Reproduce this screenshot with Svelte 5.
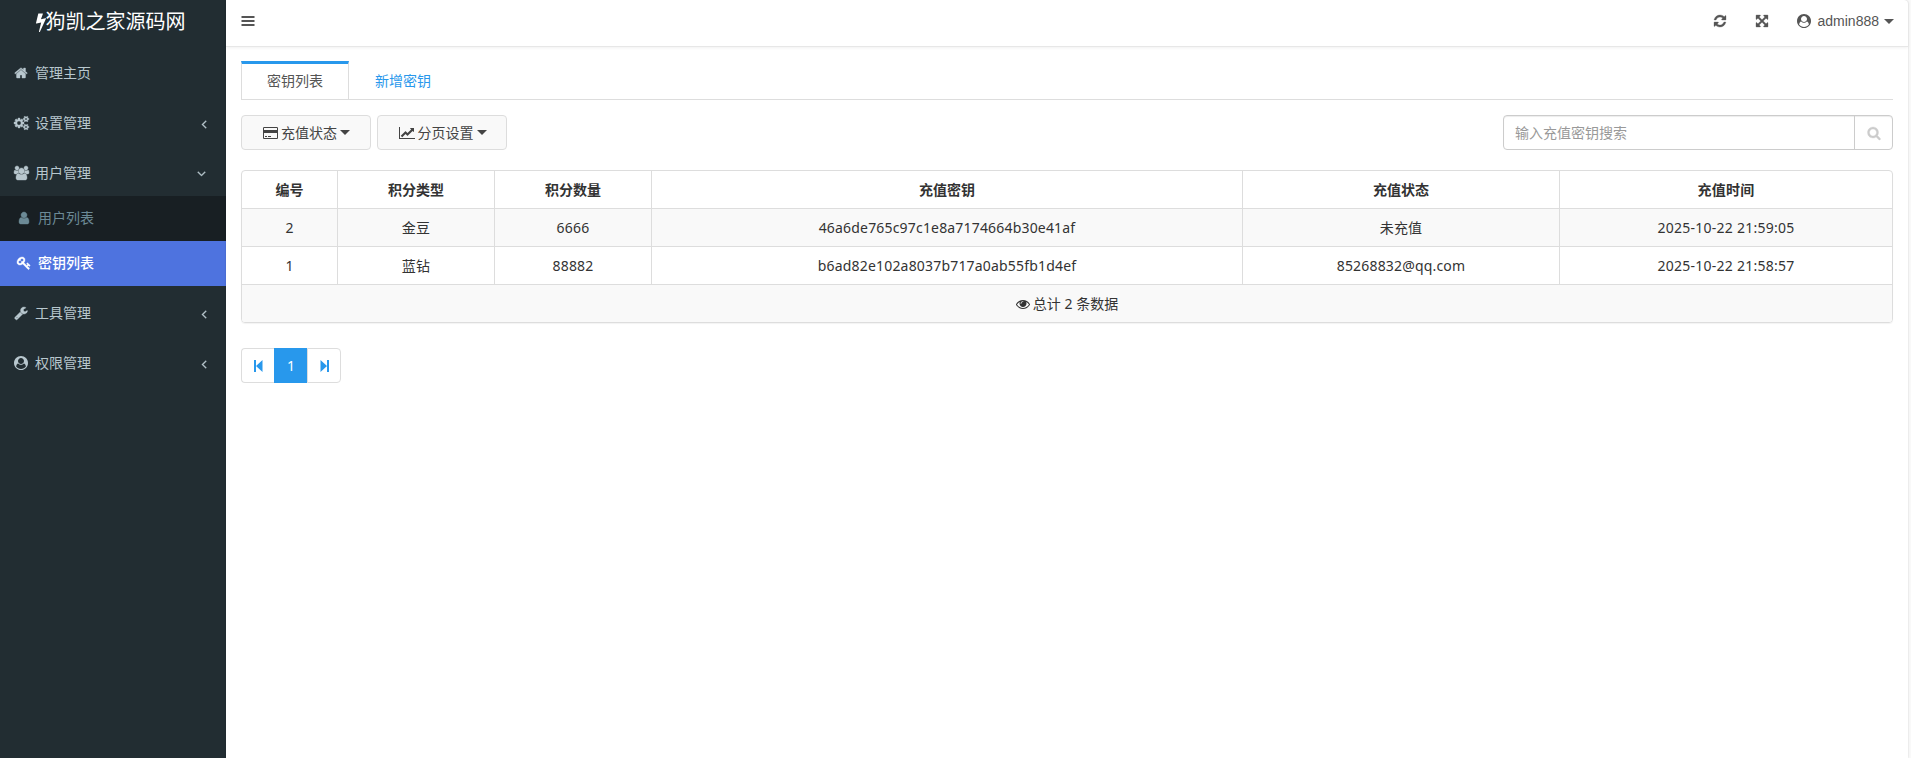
<script>
  const icons = {
    bolt: [1792, 'M1333 566q18 20 7 44l-540 1157q-13 25-42 25-4 0-14-2-17-5-25.5-19t-4.5-30l197-808-406 101q-4 1-12 1-18 0-31-11-18-15-13-39l201-825q4-14 16-23t28-9h328q19 0 32 12.5t13 29.5q0 8-5 18l-171 463 396-98q8-2 12-2 19 0 34 15z'],
    home: [1792, 'M1472 992v480q0 26-19 45t-45 19h-384v-384h-256v384h-384q-26 0-45-19t-19-45v-480q0-1 .5-3t.5-3l575-474 575 474q1 2 1 6zm223-69l-62 74q-8 9-21 11h-3q-13 0-21-7l-692-577-692 577q-12 8-24 7-13-2-21-11l-62-74q-8-10-7-23.5t11-21.5l719-599q32-26 76-26t76 26l244 204v-195q0-14 9-23t23-9h192q14 0 23 9t9 23v408l219 182q10 8 11 21.5t-7 23.5z'],
    cogs: [1920, 'M896 896q0-106-75-181t-181-75-181 75-75 181 75 181 181 75 181-75 75-181zm768 512q0-52-38-90t-90-38-90 38-38 90q0 53 37.5 90.5t90.5 37.5 90.5-37.5 37.5-90.5zm0-1024q0-52-38-90t-90-38-90 38-38 90q0 53 37.5 90.5t90.5 37.5 90.5-37.5 37.5-90.5zm-384 421v185q0 10-7 19.5t-16 10.5l-155 24q-11 35-32 76 34 48 90 115 7 11 7 20 0 12-7 19-23 30-82.5 89.5t-78.5 59.5q-11 0-21-7l-115-90q-37 19-77 31-11 108-23 155-7 24-30 24h-186q-11 0-20-7.5t-10-17.5l-23-153q-34-10-75-31l-118 89q-7 7-20 7-11 0-21-8-144-133-144-160 0-9 7-19 10-14 41-53t47-61q-23-44-35-82l-152-24q-10-1-17-9.5t-7-19.5v-185q0-10 7-19.5t16-10.5l155-24q11-35 32-76-34-48-90-115-7-11-7-20 0-12 7-20 22-30 82-89t79-59q11 0 21 7l115 90q34-18 77-32 11-108 23-154 7-24 30-24h186q11 0 20 7.5t10 17.5l23 153q34 10 75 31l118-89q8-7 20-7 11 0 21 8 144 133 144 160 0 8-7 19-12 16-42 54t-45 60q23 48 34 82l152 23q10 2 17 10.5t7 19.5zm640 533v140q0 16-149 31-12 27-30 52 51 113 51 138 0 4-4 7-122 71-124 71-8 0-46-47t-52-68q-20 2-30 2t-30-2q-14 21-52 68t-46 47q-2 0-124-71-4-3-4-7 0-25 51-138-18-25-30-52-149-15-149-31v-140q0-16 149-31 13-29 30-52-51-113-51-138 0-4 4-7 4-2 35-20t59-34 30-16q8 0 46 46.5t52 67.5q20-2 30-2t30 2q51-71 92-112l6-2q4 0 124 70 4 3 4 7 0 25-51 138 17 23 30 52 149 15 149 31zm0-1024v140q0 16-149 31-12 27-30 52 51 113 51 138 0 4-4 7-122 71-124 71-8 0-46-47t-52-68q-20 2-30 2t-30-2q-14 21-52 68t-46 47q-2 0-124-71-4-3-4-7 0-25 51-138-18-25-30-52-149-15-149-31v-140q0-16 149-31 13-29 30-52-51-113-51-138 0-4 4-7 4-2 35-20t59-34 30-16q8 0 46 46.5t52 67.5q20-2 30-2t30 2q51-71 92-112l6-2q4 0 124 70 4 3 4 7 0 25-51 138 17 23 30 52 149 15 149 31z'],
    users: [1920, 'M593 896q-162 5-265 128h-134q-82 0-138-40.5t-56-118.5q0-353 124-353 6 0 43.5 21t97.5 42.5 119 21.5q67 0 133-23-5 37-5 66 0 139 81 256zm1071 637q0 120-73 189.5t-194 69.5h-874q-121 0-194-69.5t-73-189.5q0-53 3.5-103.5t14-109 26.5-108.5 43-97.5 62-81 85.5-53.5 111.5-20q10 0 43 21.5t73 48 107 48 135 21.5 135-21.5 107-48 73-48 43-21.5q61 0 111.5 20t85.5 53.5 62 81 43 97.5 26.5 108.5 14 109 3.5 103.5zm-1024-1277q0 106-75 181t-181 75-181-75-75-181 75-181 181-75 181 75 75 181zm704 384q0 159-112.5 271.5t-271.5 112.5-271.5-112.5-112.5-271.5 112.5-271.5 271.5-112.5 271.5 112.5 112.5 271.5zm576 225q0 78-56 118.5t-138 40.5h-134q-103-123-265-128 81-117 81-256 0-29-5-66 66 23 133 23 59 0 119-21.5t97.5-42.5 43.5-21q124 0 124 353zm-128-609q0 106-75 181t-181 75-181-75-75-181 75-181 181-75 181 75 75 181z'],
    user: [1792, 'M1536 1399q0 109-62.5 187t-150.5 78h-854q-88 0-150.5-78t-62.5-187q0-85 8.5-160.5t31.5-152 58.5-131 94-89 134.5-34.5q131 128 313 128t313-128q76 0 134.5 34.5t94 89 58.5 131 31.5 152 8.5 160.5zm-256-887q0 159-112.5 271.5t-271.5 112.5-271.5-112.5-112.5-271.5 112.5-271.5 271.5-112.5 271.5 112.5 112.5 271.5z'],
    key: [1792, 'M832 512q0-80-56-136t-136-56-136 56-56 136q0 42 19 83-41-19-83-19-80 0-136 56t-56 136 56 136 136 56 136-56 56-136q0-42-19-83 41 19 83 19 80 0 136-56t56-136zm851 704q0 17-49 66t-66 49q-9 0-28.5-16t-36.5-33-38.5-40-24.5-26l-96 96 220 220q28 28 28 68 0 42-39 81t-81 39q-40 0-68-28l-671-671q-176 131-365 131-163 0-265.5-102.5t-102.5-265.5q0-160 95-313t248-248 313-95q163 0 265.5 102.5t102.5 265.5q0 189-131 365l355 355 96-96q-3-3-26-24.5t-40-38.5-33-36.5-16-28.5q0-17 49-66t66-49q13 0 23 10 6 6 46 44.5t82 79.5 86.5 86 73 78 28.5 41z'],
    wrench: [1792, 'M448 1472q0-26-19-45t-45-19-45 19-19 45 19 45 45 19 45-19 19-45zm644-420l-682 682q-37 37-90 37-52 0-91-37l-106-108q-38-36-38-90 0-53 38-91l681-681q39 98 114.5 173.5t173.5 114.5zm634-435q0 39-23 106-47 134-164.5 217.5t-258.5 83.5q-185 0-316.5-131.5t-131.5-316.5 131.5-316.5 316.5-131.5q58 0 121.5 16.5t107.5 46.5q16 11 16 28t-16 28l-293 169v224l193 107q5-3 79-48.5t135.5-81 70.5-35.5q15 0 23.5 10t8.5 25z'],
    account: [1792, 'M1523 1339q-22-155-87.5-257.5t-184.5-118.5q-67 74-159.5 115.5t-195.5 41.5-195.5-41.5-159.5-115.5q-119 16-184.5 118.5t-87.5 257.5q106 150 271 237.5t356 87.5 356-87.5 271-237.5zm-243-699q0-159-112.5-271.5t-271.5-112.5-271.5 112.5-112.5 271.5 112.5 271.5 271.5 112.5 271.5-112.5 112.5-271.5zm512 256q0 182-71 347.5t-190.5 286-285.5 191.5-349 71q-182 0-348-71t-286-191-191-286-71-348 71-348 191-286 286-191 348-71 348 71 286 191 191 286 71 348z'],
    angle: [1792, 'M1203 544q0 13-10 23l-393 393 393 393q10 10 10 23t-10 23l-50 50q-10 10-23 10t-23-10l-466-466q-10-10-10-23t10-23l466-466q10-10 23-10t23 10l50 50q10 10 10 23z'],
    bars: [1792, 'M64 256h1664v256H64zM64 768h1664v256H64zM64 1280h1664v256H64z'],
    refresh: [1792, 'M1639 1056q0 5-1 7-64 268-268 434.5t-478 166.5q-146 0-282.5-55t-243.5-157l-129 129q-19 19-45 19t-45-19-19-45v-448q0-26 19-45t45-19h448q26 0 45 19t19 45-19 45l-137 137q71 66 161 102t187 36q134 0 250-65t186-179q11-17 53-117 8-23 30-23h192q13 0 22.5 9.5t9.5 22.5zm25-800v448q0 26-19 45t-45 19h-448q-26 0-45-19t-19-45 19-45l138-138q-148-137-349-137-134 0-250 65t-186 179q-11 17-53 117-8 23-30 23h-199q-13 0-22.5-9.5t-9.5-22.5v-7q65-268 270-434.5t480-166.5q146 0 284 55.5t245 156.5l130-129q19-19 45-19t45 19 19 45z'],
    expand: [1792, 'M1411 541l-355 355 355 355 144-144q29-31 70-14 39 17 39 59v448q0 26-19 45t-45 19h-448q-42 0-59-40-17-39 14-69l144-144-355-355-355 355 144 144q31 30 14 69-17 40-59 40h-448q-26 0-45-19t-19-45v-448q0-42 40-59 39-17 69 14l144 144 355-355-355-355-144 144q-19 19-45 19-12 0-24-5-40-17-40-59v-448q0-26 19-45t45-19h448q42 0 59 40 17 39-14 69l-144 144 355 355 355-355-144-144q-31-30-14-69 17-40 59-40h448q26 0 45 19t19 45v448q0 42-39 59-13 5-25 5-26 0-45-19z'],
    card: [1920, 'M1760 128q66 0 113 47t47 113v1216q0 66-47 113t-113 47h-1600q-66 0-113-47t-47-113v-1216q0-66 47-113t113-47h1600zm-1600 128q-13 0-22.5 9.5t-9.5 22.5v224h1664v-224q0-13-9.5-22.5t-22.5-9.5h-1600zm1600 1280q13 0 22.5-9.5t9.5-22.5v-608h-1664v608q0 13 9.5 22.5t22.5 9.5h1600zm-1504-128v-128h256v128h-256zm384 0v-128h384v128h-384z'],
    chart: [2048, 'M2048 1536v128h-2048v-1536h128v1408h1920zm-128-1248v435q0 21-19.5 29.5t-35.5-7.5l-121-121-633 633q-10 10-23 10t-23-10l-233-233-416 416-192-192 585-585q10-10 23-10t23 10l233 233 464-464-121-121q-16-16-7.5-35.5t29.5-19.5h435q14 0 23 9t9 23z'],
    search: [1792, 'M1216 832q0-185-131.5-316.5t-316.5-131.5-316.5 131.5-131.5 316.5 131.5 316.5 316.5 131.5 316.5-131.5 131.5-316.5zm512 832q0 52-38 90t-90 38q-54 0-90-38l-343-342q-179 124-399 124-143 0-273.5-55.5t-225-150-150-225-55.5-273.5 55.5-273.5 150-225 225-150 273.5-55.5 273.5 55.5 225 150 150 225 55.5 273.5q0 220-124 399l343 343q37 37 37 90z'],
    eye: [1792, 'M1664 960q-152-236-381-353 61 104 61 225 0 185-131.5 316.5t-316.5 131.5-316.5-131.5-131.5-316.5q0-121 61-225-229 117-381 353 133 205 333.5 326.5t434.5 121.5 434.5-121.5 333.5-326.5zm-720-384q0-20-14-34t-34-14q-125 0-214.5 89.5t-89.5 214.5q0 20 14 34t34 14 34-14 14-34q0-86 61-147t147-61q20 0 34-14t14-34zm848 384q0 34-20 69-140 230-376.5 368.5t-499.5 138.5-499.5-139-376.5-368q-20-35-20-69t20-69q140-229 376.5-368t499.5-139 499.5 139 376.5 368q20 35 20 69z'],
  };

  const menu = [
    { icon: 'home', label: '管理主页' },
    { icon: 'cogs', label: '设置管理', arrow: true },
    {
      icon: 'users', label: '用户管理', arrow: true, open: true,
      children: [
        { icon: 'user', label: '用户列表' },
        { icon: 'key', label: '密钥列表', active: true },
      ],
    },
    { icon: 'wrench', label: '工具管理', arrow: true },
    { icon: 'account', label: '权限管理', arrow: true },
  ];

  const headers = ['编号', '积分类型', '积分数量', '充值密钥', '充值状态', '充值时间'];
  const rows = [
    ['2', '金豆', '6666', '46a6de765c97c1e8a7174664b30e41af', '未充值', '2025-10-22 21:59:05'],
    ['1', '蓝钻', '88882', 'b6ad82e102a8037b717a0ab55fb1d4ef', '85268832@qq.com', '2025-10-22 21:58:57'],
  ];
</script>

{#snippet icon(name)}
  <svg class="icon {name}" viewBox="0 0 {icons[name][0]} 1792" width={icons[name][0] / 128} height="14"><path fill-rule="evenodd" d={icons[name][1]} /></svg>
{/snippet}

<div class="app">
  <aside>
    <div class="logo"><span class="lightning">{@render icon('bolt')}</span><span>狗凯之家源码网</span></div>
    <nav>
      {#each menu as item}
        <div class="group">
          <a class="item" href="#top">
            <span class="glyph">{@render icon(item.icon)}</span>
            <span>{item.label}</span>
            {#if item.arrow}<span class="arrow" class:open={item.open}>{@render icon('angle')}</span>{/if}
          </a>
          {#each item.children ?? [] as child}
            <a class="sub" class:active={child.active} href="#top">
              <span class="glyph">{@render icon(child.icon)}</span>
              <span>{child.label}</span>
            </a>
          {/each}
        </div>
      {/each}
    </nav>
  </aside>

  <div class="main">
    <header>
      {@render icon('bars')}
      <div class="tools">
        <span>{@render icon('refresh')}</span>
        <span>{@render icon('expand')}</span>
        <span class="profile">{@render icon('account')}<span class="name">admin888</span><i class="caret"></i></span>
      </div>
    </header>

    <section>
      <div class="tabs">
        <a class="tab current" href="#top">密钥列表</a>
        <a class="tab" href="#top">新增密钥</a>
      </div>

      <div class="toolbar">
        <button>{@render icon('card')}<span>充值状态</span><i class="caret"></i></button>
        <button>{@render icon('chart')}<span>分页设置</span><i class="caret"></i></button>
        <div class="find">
          <input placeholder="输入充值密钥搜索" />
          <span class="go">{@render icon('search')}</span>
        </div>
      </div>

      <div class="table">
        <div class="row head">{#each headers as h}<div>{h}</div>{/each}</div>
        {#each rows as row, i}
          <div class="row body" class:stripe={i % 2 === 0}>{#each row as cell}<div>{cell}</div>{/each}</div>
        {/each}
        <div class="total">{@render icon('eye')}<span>总计 2 条数据</span></div>
      </div>

      <div class="pages">
        <a href="#top" aria-label="首页"><svg width="9" height="12" viewBox="0 0 9 12"><path d="M0 0h2v12H0zM8.5 0v12L2 6z" /></svg></a>
        <a href="#top" class="on">1</a>
        <a href="#top" aria-label="末页"><svg width="9" height="12" viewBox="0 0 9 12"><path d="M7 0h2v12H7zM.5 0v12L7 6z" /></svg></a>
      </div>
    </section>
  </div>
</div>

<style>
  :global(body) { background: #f9f9f9; }
  .app {
    display: flex;
    height: 758px;
    overflow: hidden;
    font: 14px/20px "Noto Sans", "Noto Sans CJK SC", sans-serif;
    color: #333;
  }
  .app a { text-decoration: none; color: inherit; }
  .icon { display: block; flex: none; fill: currentColor; overflow: visible; }

  aside { width: 226px; flex: none; background: #222d32; color: #b8c7ce; }
  .logo {
    display: flex;
    align-items: center;
    justify-content: center;
    height: 44px;
    margin-bottom: 6px;
    padding-right: 5px;
    color: #fff;
    font-size: 20px;
  }
  .lightning .icon { width: 20px; height: 20px; margin: 0 -5px; }
  .group { margin-bottom: 4px; }
  .item, .sub { display: flex; align-items: center; }
  .item { height: 46px; padding: 0 15px 0 12px; }
  .item .glyph { width: 18px; margin-right: 5px; }
  .glyph { display: flex; justify-content: center; }
  .glyph .icon { stroke: currentColor; stroke-width: 50; }
  .arrow { margin: 2px 0 0 auto; }
  .arrow .icon { stroke: currentColor; stroke-width: 40; }
  .arrow.open { transform: rotate(-90deg); margin-right: 3px; }
  .sub { height: 45px; padding: 0 0 2px 15px; box-sizing: border-box; background: #181f23; }
  .app a.sub { color: #6c8a96; }
  .sub .glyph { width: 18px; margin-right: 5px; padding-top: 1px; }
  .app a.sub.active { background: #4e73df; color: #fff; font-weight: 500; }

  .main {
    flex: 1;
    margin-right: 3px;
    background: #fff;
    border-top-right-radius: 4px;
    box-shadow: 0 0 2px rgba(0, 0, 0, 0.2);
  }
  header {
    display: flex;
    align-items: center;
    justify-content: space-between;
    height: 46px;
    padding: 0 15px 4px;
    box-sizing: border-box;
    box-shadow: 0 1px 0 #e7e7e7, 0 2px 3px rgba(0, 0, 0, 0.06);
    color: #555;
  }
  .tools { display: flex; align-items: center; gap: 28px; }
  .tools .icon { stroke: currentColor; stroke-width: 40; }
  .app .icon.account { stroke: none; }
  .profile { display: flex; align-items: center; font-family: "Liberation Sans", Arial, sans-serif; }
  .name { margin: 0 5px 0 7px; }
  .caret { width: 0; border: 5px solid transparent; border-bottom-width: 0; border-top-color: currentColor; margin-right: -1px; }

  section { padding: 15px; }
  .tabs { display: flex; height: 39px; box-sizing: border-box; border-bottom: 1px solid #ddd; }
  .tab {
    width: 108px;
    height: 39px;
    box-sizing: border-box;
    padding-top: 10px;
    text-align: center;
  }
  .app .tabs .tab { color: #2898ec; }
  .app .tabs .tab.current {
    padding-top: 7px;
    border: 1px solid #ddd;
    border-top: 3px solid #2898ec;
    color: #555;
  }
  .toolbar { display: flex; gap: 6px; margin-top: 15px; height: 35px; }
  button {
    display: flex;
    align-items: center;
    justify-content: center;
    gap: 3px;
    width: 130px;
    padding: 0;
    border: 1px solid #ddd;
    border-radius: 4px;
    background: #f9f9f9;
    font: inherit;
    color: #444;
  }
  .find {
    display: flex;
    width: 390px;
    margin-left: auto;
    box-sizing: border-box;
    border: 1px solid #ccc;
    border-radius: 4px;
    box-shadow: inset 0 1px 1px rgba(0, 0, 0, 0.075);
  }
  input { flex: 1; min-width: 0; padding: 0 11px; border: 0; background: none; font: inherit; outline: 0; }
  input::placeholder { color: #999; opacity: 1; }
  .go { display: flex; align-items: center; justify-content: center; width: 37px; border-left: 1px solid #ccc; color: #ccc; }
  .go .icon { stroke: currentColor; stroke-width: 40; }

  .table {
    margin-top: 20px;
    border: 1px solid #ddd;
    border-radius: 4px;
    box-shadow: 0 1px 1px rgba(0, 0, 0, 0.05);
    overflow: hidden;
  }
  .row { display: grid; grid-template-columns: 96px 157px 157px 591px 317px 1fr; border-bottom: 1px solid #ddd; }
  .row > div { height: 37px; line-height: 37px; text-align: center; border-right: 1px solid #ddd; }
  .row > div:last-child { border-right: 0; letter-spacing: 0.25px; }
  .head { font-weight: 700; }
  .body { letter-spacing: 0.18px; }
  .stripe, .total { background: #f9f9f9; }
  .total { display: flex; align-items: center; justify-content: center; gap: 3px; height: 37px; }

  .pages { display: flex; width: max-content; margin-top: 25px; height: 35px; }
  .pages a {
    display: flex;
    align-items: center;
    justify-content: center;
    width: 33px;
    box-sizing: border-box;
    border: 1px solid #ddd;
    border-right: 0;
  }
  .app .pages a { color: #2898ec; }
  .pages a:first-child { border-radius: 4px 0 0 4px; }
  .pages a:last-child { width: 34px; border-right: 1px solid #ddd; border-radius: 0 4px 4px 0; }
  .app .pages a.on { background: #2898ec; border-color: #2898ec; color: #fff; }
  .pages svg { fill: currentColor; }
</style>
